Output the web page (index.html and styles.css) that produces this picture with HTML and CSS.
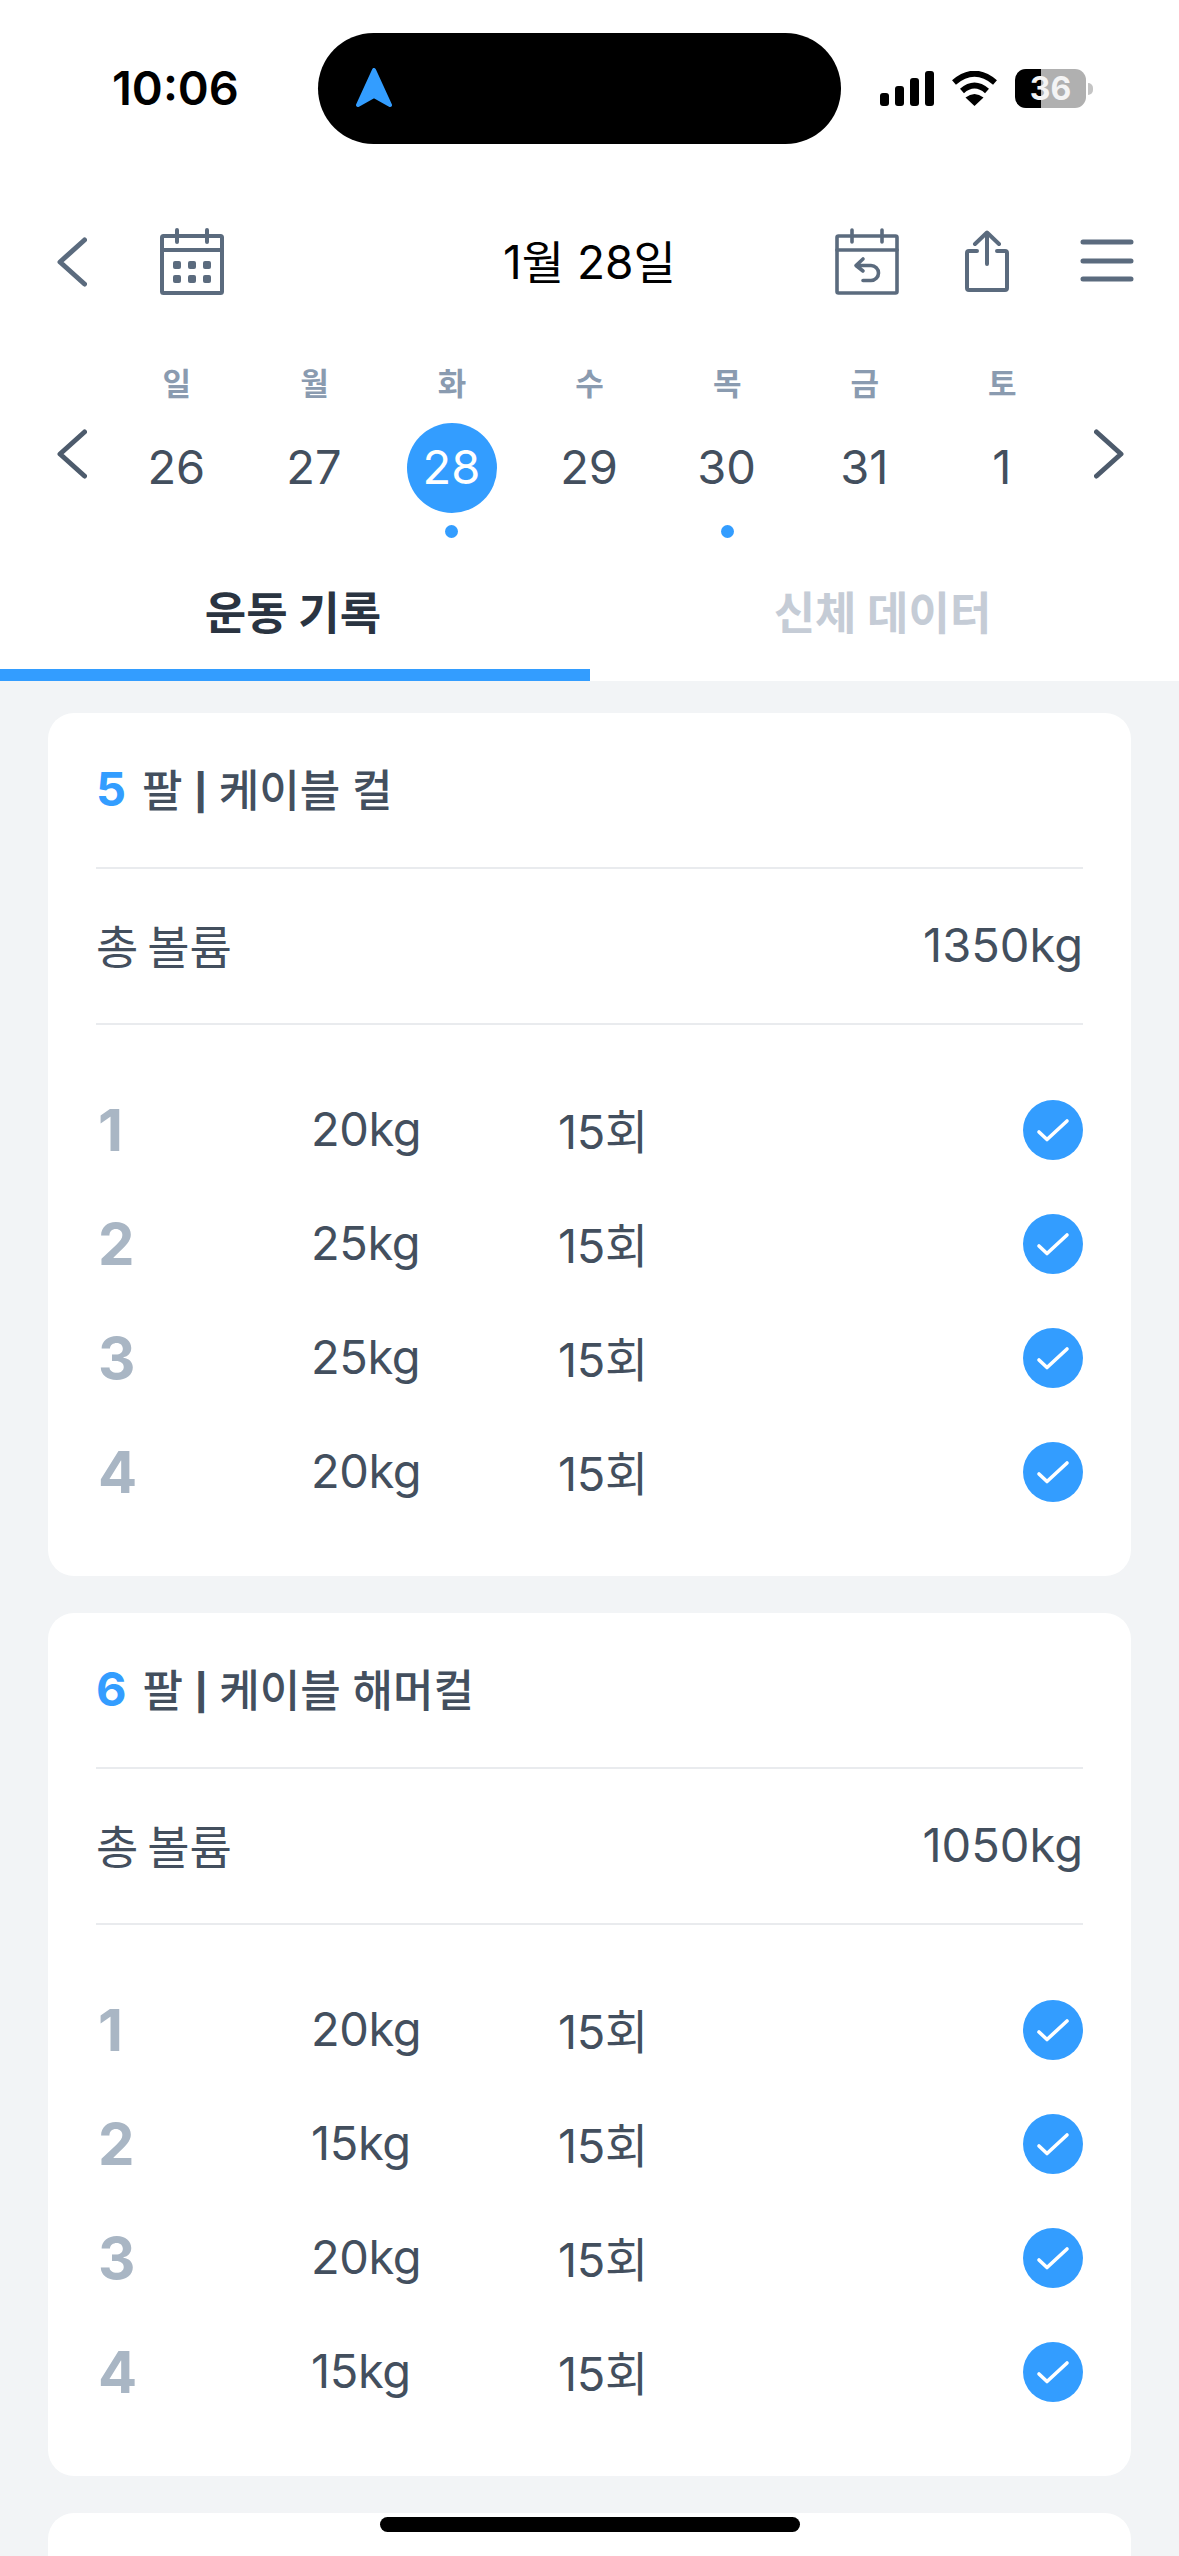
FILE: index.html
```html
<!DOCTYPE html>
<html lang="ko">
<head>
    <meta charset="UTF-8">
    <meta name="viewport" content="width=device-width, initial-scale=1.0">
    <title>운동 기록</title>
    <link rel="stylesheet" href="styles.css">
</head>
<body>

    <svg class="sprites" width="0" height="0">
        <symbol id="check" viewBox="0 0 60 60">
            <circle cx="30" cy="30" r="30" fill="#339dff"/>
            <path d="M16 32 L24 39.5 L44 21" fill="none" stroke="#fff" stroke-width="3.6" stroke-linecap="round" stroke-linejoin="round"/>
        </symbol>
        <symbol id="chevron" viewBox="0 0 30 50">
            <path d="M27.5 3 L3 25 L27.5 47" fill="none" stroke="currentColor" stroke-width="5" stroke-linecap="round" stroke-linejoin="round"/>
        </symbol>
    </svg>

    <div class="phone">
        <div class="status">
            <div class="time">10:06</div>
            <div class="island">
                <svg width="38" height="41" viewBox="0 0 38 41"><path d="M19 2 L35 37 L19 28 L3 37 Z" fill="#339dff" stroke="#339dff" stroke-width="4" stroke-linejoin="round"/></svg>
            </div>
            <div class="status-icons">
                <div class="signal">
                    <span class="bar1"></span><span class="bar2"></span><span class="bar3"></span><span class="bar4"></span>
                </div>
                <svg width="47" height="35" viewBox="0 0 47 35">
                    <path d="M3 11.5 Q23.5 -6 44 11.5" fill="none" stroke="#000" stroke-width="6"/>
                    <path d="M11 20 Q23.5 9 36 20" fill="none" stroke="#000" stroke-width="6"/>
                    <path d="M14.5 26.5 Q23.5 19.5 32.5 26.5 L23.5 35 Z" fill="#000"/>
                </svg>
                <div class="battery">
                    <div class="battery-fill"></div>
                    <span class="battery-num">36</span>
                </div>
                <div class="battery-cap"></div>
            </div>
        </div>

        <div class="topbar">
            <div class="topbar-left">
                <svg class="icon chevron"><use href="#chevron"/></svg>
                <svg class="icon" width="64" height="67" viewBox="0 0 64 67" fill="none" stroke="#5b6b7e" stroke-width="4" stroke-linecap="round" stroke-linejoin="round">
                    <rect x="2" y="8" width="60" height="57" rx="1.5"/>
                    <path d="M2 22 H62 M17 2 V14 M47 2 V14"/>
                    <g fill="#5b6b7e" stroke="none">
                        <rect x="13" y="33" width="8" height="8" rx="2"/><rect x="28" y="33" width="8" height="8" rx="2"/><rect x="43" y="33" width="8" height="8" rx="2"/>
                        <rect x="13" y="47" width="8" height="8" rx="2"/><rect x="28" y="47" width="8" height="8" rx="2"/><rect x="43" y="47" width="8" height="8" rx="2"/>
                    </g>
                </svg>
            </div>
            <div class="date-title">1월 28일</div>
            <div class="topbar-right">
                <svg class="icon" width="64" height="67" viewBox="0 0 64 67" fill="none" stroke="#5b6b7e" stroke-width="3.6" stroke-linecap="round" stroke-linejoin="round">
                    <rect x="2" y="8" width="60" height="57" rx="1.5"/>
                    <path d="M2 22 H62 M17 2 V14 M47 2 V14"/>
                    <path d="M28 31 L21 37.5 L28 43 M21 37.5 H36 A7.5 7.5 0 0 1 36 52.5 H28"/>
                </svg>
                <svg class="icon share" width="44" height="62" viewBox="0 0 44 62" fill="none" stroke="#5b6b7e" stroke-width="4" stroke-linecap="round" stroke-linejoin="round">
                    <path d="M12 21 H4 A2 2 0 0 0 2 23 V58 A2 2 0 0 0 4 60 H40 A2 2 0 0 0 42 58 V23 A2 2 0 0 0 40 21 H32"/>
                    <path d="M22 34 V3 M10 14 L22 2.5 L34 14"/>
                </svg>
                <svg class="icon menu" width="54" height="44" viewBox="0 0 54 44" fill="none" stroke="#5b6b7e" stroke-width="5" stroke-linecap="round">
                    <path d="M3 3 H51 M3 22 H51 M3 40 H51"/>
                </svg>
            </div>
        </div>

        <div class="week">
            <svg class="week-arrow"><use href="#chevron"/></svg>
            <div class="week-days">
                <div class="day"><span class="day-name">일</span><span class="day-num">26</span></div>
                <div class="day"><span class="day-name">월</span><span class="day-num">27</span></div>
                <div class="day has-log"><span class="day-name">화</span><span class="day-num selected">28</span></div>
                <div class="day"><span class="day-name">수</span><span class="day-num">29</span></div>
                <div class="day has-log"><span class="day-name">목</span><span class="day-num">30</span></div>
                <div class="day"><span class="day-name">금</span><span class="day-num">31</span></div>
                <div class="day"><span class="day-name">토</span><span class="day-num">1</span></div>
            </div>
            <svg class="week-arrow flip"><use href="#chevron"/></svg>
        </div>

        <div class="tabs">
            <div class="tab active">운동 기록</div>
            <div class="tab">신체 데이터</div>
        </div>

        <div class="content">
            <div class="card">
                <div class="card-title"><b>5</b> 팔 <span class="pipe">|</span> 케이블 컬</div>
                <div class="card-total"><span>총 볼륨</span><span>1350kg</span></div>
                <div class="sets">
                    <div class="set"><span class="set-no">1</span><span class="set-val">20kg</span><span class="set-val">15회</span><svg class="check"><use href="#check"/></svg></div>
                    <div class="set"><span class="set-no">2</span><span class="set-val">25kg</span><span class="set-val">15회</span><svg class="check"><use href="#check"/></svg></div>
                    <div class="set"><span class="set-no">3</span><span class="set-val">25kg</span><span class="set-val">15회</span><svg class="check"><use href="#check"/></svg></div>
                    <div class="set"><span class="set-no">4</span><span class="set-val">20kg</span><span class="set-val">15회</span><svg class="check"><use href="#check"/></svg></div>
                </div>
            </div>

            <div class="card">
                <div class="card-title"><b>6</b> 팔 <span class="pipe">|</span> 케이블 해머컬</div>
                <div class="card-total"><span>총 볼륨</span><span>1050kg</span></div>
                <div class="sets">
                    <div class="set"><span class="set-no">1</span><span class="set-val">20kg</span><span class="set-val">15회</span><svg class="check"><use href="#check"/></svg></div>
                    <div class="set"><span class="set-no">2</span><span class="set-val">15kg</span><span class="set-val">15회</span><svg class="check"><use href="#check"/></svg></div>
                    <div class="set"><span class="set-no">3</span><span class="set-val">20kg</span><span class="set-val">15회</span><svg class="check"><use href="#check"/></svg></div>
                    <div class="set"><span class="set-no">4</span><span class="set-val">15kg</span><span class="set-val">15회</span><svg class="check"><use href="#check"/></svg></div>
                </div>
            </div>

            <div class="card"></div>
        </div>

        <div class="home-bar"></div>
    </div>

</body>
</html>
```

FILE: styles.css
```css
* {
    box-sizing: border-box;
}

body {
    margin: 0;
    font-family: Inter, "Noto Sans CJK KR", sans-serif;
    color: #434f5e;
    background: #fff;
}

.sprites {
    position: absolute;
}

.phone {
    position: relative;
    width: 1179px;
    height: 2556px;
    overflow: hidden;
    display: flex;
    flex-direction: column;
}

/* status bar */
.status {
    display: flex;
    height: 190px;
    padding-top: 33px;
    flex-shrink: 0;
}

.time {
    width: 318px;
    height: 111px;
    padding-left: 112px;
    font-size: 47px;
    font-weight: 600;
    line-height: 109px;
    color: #000;
}

.island {
    width: 523px;
    height: 111px;
    border-radius: 56px;
    background: #000;
    padding-left: 37px;
    display: flex;
    align-items: center;
}

.status-icons {
    display: flex;
    align-items: center;
    height: 111px;
    padding-left: 39px;
}

.signal {
    display: flex;
    align-items: flex-end;
    gap: 6px;
    height: 35px;
    margin-right: 17px;
}

.signal span {
    width: 9px;
    border-radius: 3px;
    background: #000;
}

.bar1 { height: 13px; }
.bar2 { height: 20px; }
.bar3 { height: 28px; }
.bar4 { height: 35px; }

.battery {
    position: relative;
    width: 71px;
    height: 39px;
    margin-left: 17px;
    border-radius: 11px;
    background: #b0b0b0;
    overflow: hidden;
    display: flex;
    align-items: center;
    justify-content: center;
}

.battery-fill {
    position: absolute;
    left: 0;
    top: 0;
    bottom: 0;
    width: 26px;
    background: #000;
}

.battery-num {
    position: relative;
    font-size: 32px;
    font-weight: 700;
    color: #f4f4f4;
}

.battery-cap {
    width: 5px;
    height: 12px;
    margin-left: 2px;
    border-radius: 0 6px 6px 0;
    background: #c4c4c4;
}

/* top bar */
.topbar {
    display: grid;
    grid-template-columns: 1fr auto 1fr;
    align-items: center;
    height: 67px;
    margin-top: 36px;
    padding: 0 45px;
    flex-shrink: 0;
}

.topbar-left,
.topbar-right {
    display: flex;
    align-items: center;
}

.topbar-left {
    padding-left: 12px;
}

.topbar-right {
    justify-content: flex-end;
}

.icon {
    display: block;
}

.chevron {
    width: 30px;
    height: 50px;
    margin-right: 73px;
    margin-top: 2px;
    color: #5b6b7e;
}

.share {
    margin-left: 66px;
}

.menu {
    margin-left: 71px;
}

.date-title {
    padding-top: 3px;
    font-size: 46px;
    color: #000;
    line-height: 67px;
}

/* week strip */
.week {
    display: flex;
    align-items: flex-start;
    margin-top: 72px;
    flex-shrink: 0;
}

.week-arrow {
    width: 30px;
    height: 50px;
    margin: 64px 21px 0 57px;
    color: #4d5b6c;
    flex-shrink: 0;
}

.week-arrow.flip {
    margin: 64px 0 0 23px;
    transform: scaleX(-1);
}

.week-days {
    display: grid;
    grid-template-columns: repeat(7, 137.6px);
}

.day {
    position: relative;
    display: flex;
    flex-direction: column;
    align-items: center;
    height: 195px;
}

.day-name {
    height: 38px;
    font-size: 31px;
    font-weight: 600;
    line-height: 38px;
    color: #8a9bb0;
}

.day-num {
    width: 90px;
    height: 90px;
    margin-top: 20px;
    border-radius: 50%;
    padding-right: 1px;
    font-size: 47px;
    line-height: 88px;
    text-align: center;
}

.day-num.selected {
    background: #339dff;
    color: #fff;
}

.has-log::after {
    content: "";
    width: 13px;
    height: 13px;
    margin-top: 12px;
    border-radius: 50%;
    background: #339dff;
}

/* tabs */
.tabs {
    display: grid;
    grid-template-columns: 590px 589px;
    height: 121px;
    flex-shrink: 0;
}

.tab {
    display: flex;
    align-items: center;
    justify-content: center;
    padding: 0 4px 20px 0;
    font-size: 45px;
    font-weight: 700;
    color: #c5ccd6;
}

.tab.active {
    color: #2a3441;
    border-bottom: 12px solid #339dff;
    padding-bottom: 8px;
}

/* record cards */
.content {
    flex: 1;
    display: flex;
    flex-direction: column;
    gap: 37px;
    padding: 32px 48px 0;
    background: #f2f4f6;
}

.card {
    height: 863px;
    padding: 0 48px;
    border-radius: 26px;
    background: #fff;
    flex-shrink: 0;
}

.card-title {
    display: flex;
    align-items: center;
    gap: 12px;
    height: 156px;
    padding-bottom: 4px;
    border-bottom: 2px solid #e9ebee;
    font-size: 44px;
    font-weight: 500;
}

.card-title b {
    margin-right: 4px;
    font-size: 47px;
    font-weight: 700;
    color: #339dff;
}

.pipe {
    font-family: "Liberation Sans", sans-serif;
    font-weight: 700;
}

.card-total {
    display: flex;
    align-items: center;
    justify-content: space-between;
    height: 156px;
    padding-bottom: 4px;
    border-bottom: 2px solid #e9ebee;
    font-size: 47px;
    word-spacing: -4px;
}

.card-total span:first-child {
    font-size: 46px;
}

.sets {
    padding-top: 48px;
}

.set {
    display: grid;
    grid-template-columns: 213px 247px 1fr 60px;
    margin-left: 2px;
    align-items: center;
    height: 114px;
    font-size: 47px;
}

.set-val {
    padding-bottom: 4px;
    letter-spacing: -0.4px;
}

.set-no {
    font-size: 58px;
    font-weight: 700;
    color: #a9b6c4;
}

.check {
    width: 60px;
    height: 60px;
}

/* home indicator */
.home-bar {
    position: absolute;
    left: 380px;
    bottom: 24px;
    width: 420px;
    height: 15px;
    border-radius: 8px;
    background: #000;
}
```
